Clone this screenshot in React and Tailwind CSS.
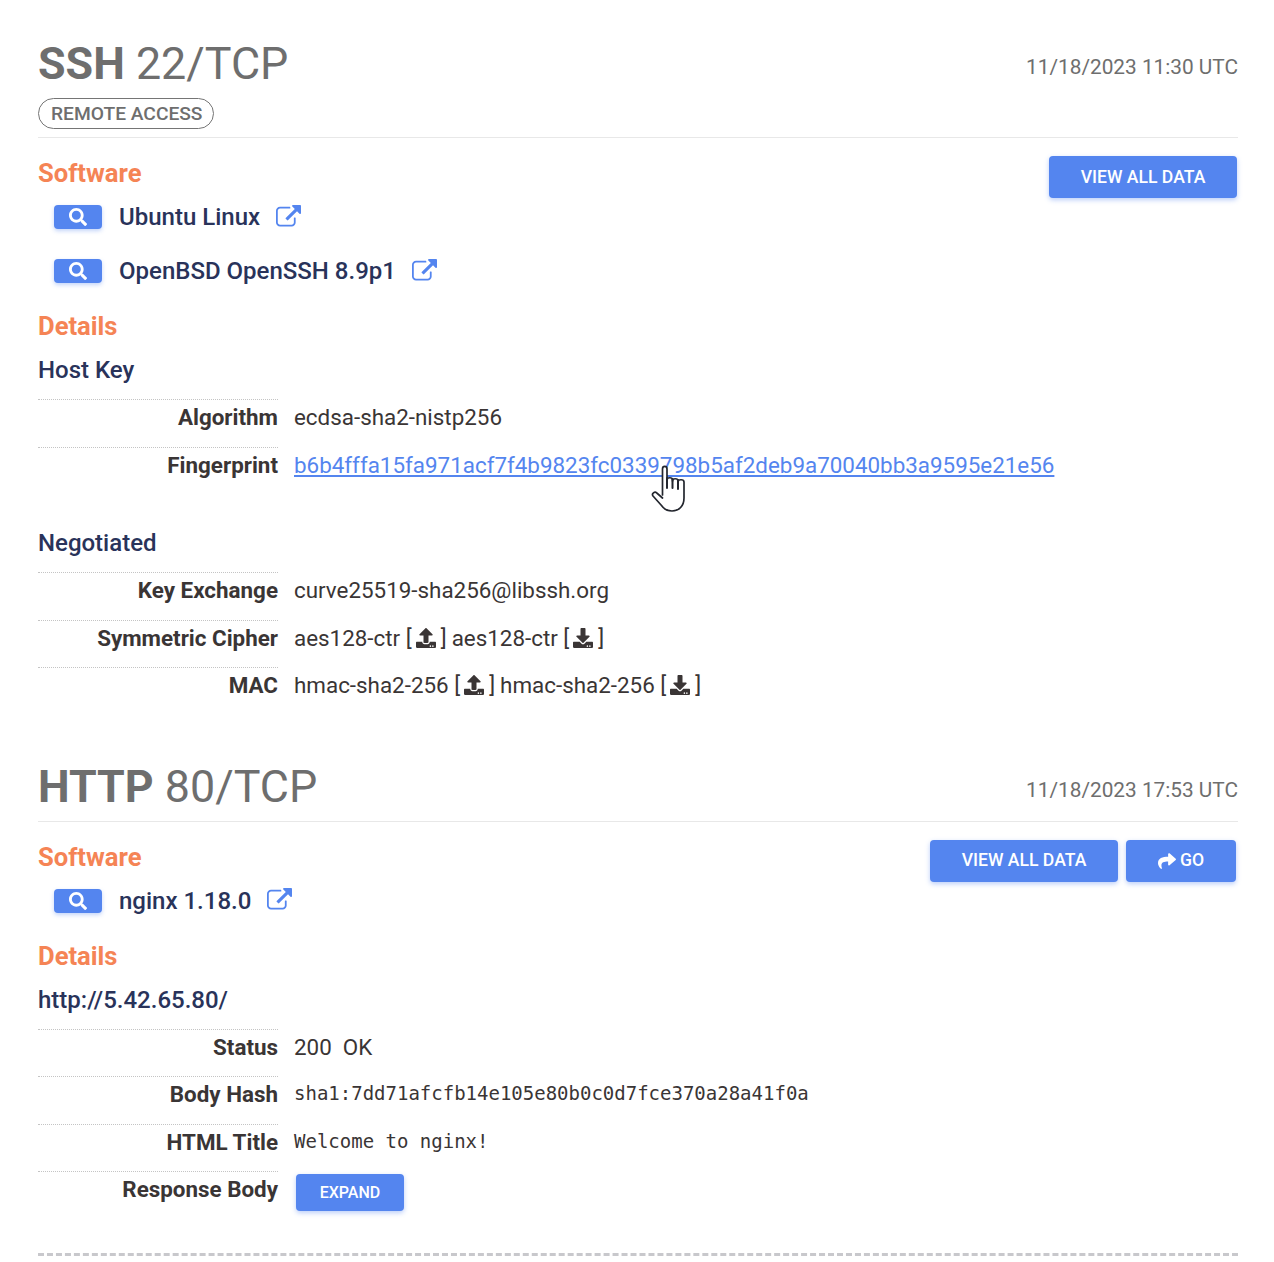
import React from 'react';
import { FaSearch, FaUpload, FaDownload, FaShare } from 'react-icons/fa';

const ExternalLink = () => (
  <svg viewBox="0 0 1792 1792" className="w-[25px] h-[25px] fill-[#5485ef]">
    <path d="M1408 928v320q0 119-84.5 203.5t-203.5 84.5h-832q-119 0-203.5-84.5t-84.5-203.5v-832q0-119 84.5-203.5t203.5-84.5h704q14 0 23 9t9 23v64q0 14-9 23t-23 9h-704q-66 0-113 47t-47 113v832q0 66 47 113t113 47h832q66 0 113-47t47-113v-320q0-14 9-23t23-9h64q14 0 23 9t9 23zm384-864v512q0 26-19 45t-45 19-45-19l-176-176-652 652q-10 10-23 10t-23-10l-114-114q-10-10-10-23t10-23l652-652-176-176q-19-19-19-45t19-45 45-19h512q26 0 45 19t19 45z" />
  </svg>
);

const HandCursor = () => (
  <svg viewBox="0 0 36 50" className="absolute left-[650px] top-[464px] w-[36px] h-[50px]">
    <path
      d="M12.500 31V5c0-3.500 4.500-3.500 4.500 0v11c0-3 5.500-3 5.500 0v1c0-3 5.500-3 5.500 0v1c0-3 6-3 6 0v16c0 8-5 13-12 13-5 0-8-2-10.500-5.500L3 32c-1.700-2.400 1.700-5 3.800-3l5.700 5"
      fill="#fff"
      stroke="#23262e"
      strokeWidth="1.700"
      strokeLinejoin="round"
      strokeLinecap="round"
    />
    <path d="M17 14v10M22.500 15v9M28 16v9" stroke="#23262e" strokeWidth="2" strokeLinecap="round" fill="none" />
  </svg>
);

const Button = ({ children, className = '' }) => (
  <button className={`flex items-center justify-center bg-[#5485ef] text-white rounded-[4px] shadow-[0_2px_5px_rgba(84,133,239,0.4)] ${className}`}>
    {children}
  </button>
);

const Heading = ({ name, port, date, dateClass }) => (
  <div className="flex justify-between items-center h-[50px] text-[#6e6e6e]">
    <h1 className="text-[44.800px] leading-[50px]">
      <span className="font-bold">{name}</span> {port}/TCP
    </h1>
    <span className={`text-[20.800px] ${dateClass}`}>{date}</span>
  </div>
);

const SectionTitle = ({ children, className = '' }) => (
  <h2 className={`text-[25.600px] leading-[32px] font-bold text-[#f58455] ${className}`}>{children}</h2>
);

const SoftwareItem = ({ name, className = '' }) => (
  <div className={`flex items-center ml-4 h-[32px] ${className}`}>
    <span className="flex items-center justify-center w-[48px] h-[24px] bg-[#5485ef] rounded-[4px] shadow-[0_2px_4px_rgba(84,133,239,0.35)] text-white">
      <FaSearch size={18} />
    </span>
    <span className="ml-[17px] mr-4 text-[24px] font-medium text-[#29335a]">{name}</span>
    <ExternalLink />
  </div>
);

const Row = ({ label, children }) => (
  <div className="flex h-[47.500px]">
    <div className="w-[240px] shrink-0 border-t border-dotted border-[#c4c4c4] text-right font-bold text-[#3a3535] text-[22.400px] pt-[2px] leading-[30px]">
      {label}
    </div>
    <div className="pl-4 text-[#3a3535] text-[22.400px] pt-[3px] leading-[30px] flex items-start">{children}</div>
  </div>
);

const Cipher = ({ name, up }) => (
  <span className="inline-flex items-center">
    {name} [
    <span className="ml-[2px] mr-[3px] w-[24px] h-[24px] flex items-center justify-center">
      {up ? <FaUpload size={20} /> : <FaDownload size={20} />}
    </span>
    ]
  </span>
);

const Mono = ({ children }) => (
  <span className="font-['DejaVu_Sans_Mono',monospace] text-[19px] leading-[28px]">{children}</span>
);

const App = () => {
  return (
    <div className="relative bg-white min-h-[1262px] pl-[38px] pt-[39px] font-['Roboto',sans-serif] overflow-hidden">
      <div className="w-[1200px]">
        {/* SSH */}
        <Heading name="SSH" port="22" date="11/18/2023 11:30 UTC" dateClass="mt-[7px]" />
        <span className="mt-[9px] inline-flex items-center h-[31px] pl-[12px] pr-[11px] pt-px border border-[#757575] rounded-full text-[19.200px] font-medium text-[#6e6e6e]">
          REMOTE ACCESS
        </span>
        <div className="flex justify-between border-t border-[#e8e8e8] mt-[8px] pt-[18px]">
          <div>
            <SectionTitle className="mt-px">Software</SectionTitle>
            <SoftwareItem name="Ubuntu Linux" className="mt-[12px]" />
            <SoftwareItem name="OpenBSD OpenSSH 8.9p1" className="mt-[22px]" />
          </div>
          <Button className="w-[188px] h-[42px] mr-px text-[17.600px] font-medium">VIEW ALL DATA</Button>
        </div>
        <SectionTitle className="mt-[23px]">Details</SectionTitle>
        <div className="mt-[12px] text-[24px] leading-[32px] font-medium text-[#29335a]">Host Key</div>
        <div className="mt-[13px]">
          <Row label="Algorithm">ecdsa-sha2-nistp256</Row>
          <Row label="Fingerprint">
            <a className="text-[#5485ef] underline">b6b4fffa15fa971acf7f4b9823fc0339798b5af2deb9a70040bb3a9595e21e56</a>
          </Row>
        </div>
        <div className="mt-[33px] text-[24px] leading-[32px] font-medium text-[#29335a]">Negotiated</div>
        <div className="mt-[13px]">
          <Row label="Key Exchange">curve25519-sha256@libssh.org</Row>
          <Row label="Symmetric Cipher">
            <Cipher name="aes128-ctr" up />
            <span className="w-[5px]" />
            <Cipher name="aes128-ctr" />
          </Row>
          <Row label="MAC">
            <Cipher name="hmac-sha2-256" up />
            <span className="w-[5px]" />
            <Cipher name="hmac-sha2-256" />
          </Row>
        </div>

        {/* HTTP */}
        <div className="mt-[47px]">
          <Heading name="HTTP" port="80" date="11/18/2023 17:53 UTC" dateClass="mt-[9px]" />
        </div>
        <div className="flex justify-between border-t border-[#e8e8e8] mt-[9px] pt-[18px]">
          <div>
            <SectionTitle className="mt-px">Software</SectionTitle>
            <SoftwareItem name="nginx 1.18.0" className="mt-[12px]" />
          </div>
          <div className="flex gap-2 mr-[2px]">
            <Button className="w-[188px] h-[42px] text-[17.600px] font-medium">VIEW ALL DATA</Button>
            <Button className="w-[110px] h-[42px] text-[17.600px] font-medium gap-1">
              <FaShare size={18} />
              GO
            </Button>
          </div>
        </div>
        <SectionTitle className="mt-[23px]">Details</SectionTitle>
        <div className="mt-[12px] text-[24px] leading-[32px] font-medium text-[#29335a]">http://5.42.65.80/</div>
        <div className="mt-[13px]">
          <Row label="Status">200&nbsp;&nbsp;OK</Row>
          <Row label="Body Hash"><Mono>sha1:7dd71afcfb14e105e80b0c0d7fce370a28a41f0a</Mono></Row>
          <Row label="HTML Title"><Mono>Welcome to nginx!</Mono></Row>
          <Row label="Response Body">
            <Button className="ml-[2px] w-[108px] h-[37px] text-[16px] font-medium">EXPAND</Button>
          </Row>
        </div>
        <div className="mt-[34px] border-t-[3px] border-dashed border-[#c8c8cc]" />
      </div>

      <HandCursor />
    </div>
  );
};

export default App;
